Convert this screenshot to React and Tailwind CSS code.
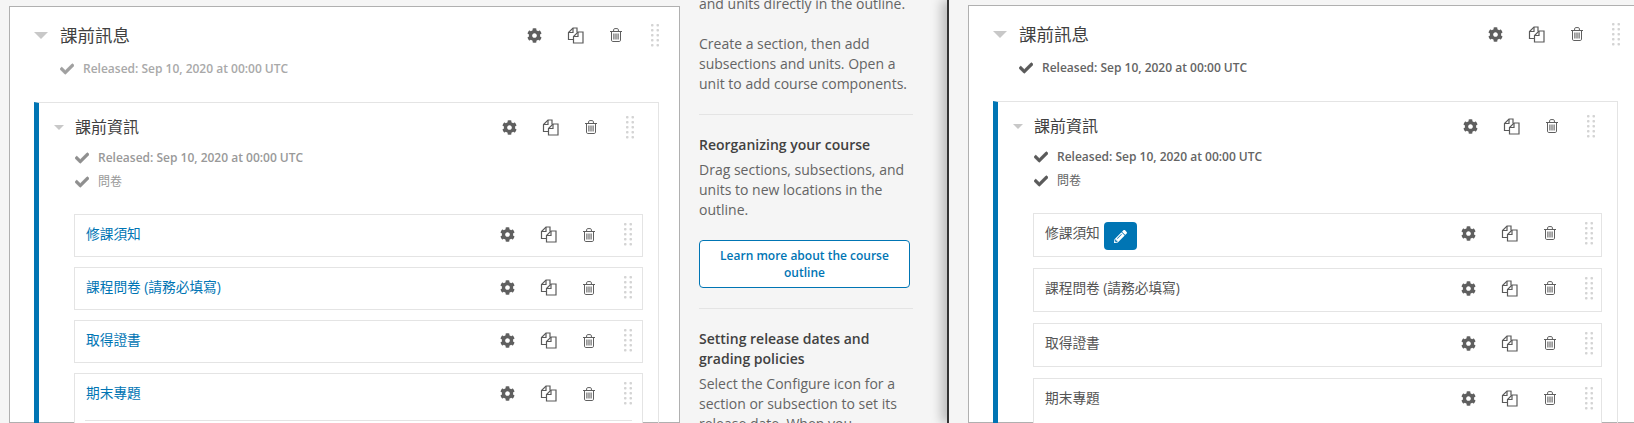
import { FaCheck, FaCog, FaPencilAlt } from "react-icons/fa";

const units = ["修課須知", "課程問卷 (請務必填寫)", "取得證書", "期末專題"];

const CopyIcon = () => (
  <svg width="17" height="17" viewBox="0 0 17 17" fill="none" stroke="#5a5a5a" strokeWidth="1.2">
    <path d="M6.5 12.5H1.5V5.5L6 1H10V5.5" />
    <path d="M1.5 5.5H6V1" />
    <path d="M6.5 16V9.5L11 5H16V16Z" fill="#fff" />
    <path d="M6.5 9.5H11V5" />
  </svg>
);

const TrashIcon = () => (
  <svg width="12" height="14" viewBox="0 0 12 14" fill="none" stroke="#5f5f5f" strokeWidth="1">
    <path d="M0 3.5H12" />
    <path d="M3.6 3.5V1.8C3.6 1.1 4.1 0.6 4.8 0.6H7.2C7.9 0.6 8.4 1.1 8.4 1.8V3.5" />
    <path d="M1.5 3.5V12.2C1.5 12.9 2 13.5 2.7 13.5H9.3C10 13.5 10.5 12.9 10.5 12.2V3.5" />
    <path d="M3.9 5.5V11.5M6 5.5V11.5M8.1 5.5V11.5" strokeWidth="1.1" />
  </svg>
);

const DragHandle = () => (
  <svg width="8" height="23" viewBox="0 0 8 23" fill="#d4d4d4">
    {[0, 5, 10, 15, 20].map((y) => (
      <g key={y}>
        <rect x="0" y={y} width="2.5" height="2.5" rx="0.8" />
        <rect x="5.5" y={y} width="2.5" height="2.5" rx="0.8" />
      </g>
    ))}
  </svg>
);

const Actions = ({ className }) => (
  <div className={`ml-auto flex items-center ${className}`}>
    <span className="flex w-[41px] justify-center text-[#5f5f5f]">
      <FaCog size={15} />
    </span>
    <span className="flex w-[41px] justify-center">
      <CopyIcon />
    </span>
    <span className="flex w-[41px] justify-center pr-[2px]">
      <TrashIcon />
    </span>
    <span className="ml-[10px] flex w-[16px] justify-center">
      <DragHandle />
    </span>
  </div>
);

const Meta = ({ children, className, checkClass }) => (
  <div className={`flex h-5 items-center gap-[9px] text-xs ${className}`}>
    <FaCheck size={14} className={checkClass} stroke="currentColor" strokeWidth={24} />
    <span>{children}</span>
  </div>
);

const leftTheme = {
  meta: "text-[#a9a9a9] font-semibold",
  subMeta: "text-[#999999] font-semibold",
  cjkMeta: "text-[#999999] font-normal",
  check: "text-[#a0a0a0]",
  subCheck: "text-[#8f8f8f]",
  unit: "h-[41px] pb-[2px] text-[#0075b4]",
  list: "gap-[10px]",
  sectionPad: "pr-[16px]",
  subPad: "pr-[20px]",
  unitPad: "pr-[6px]",
};

const rightTheme = {
  meta: "text-[#646464] font-semibold",
  subMeta: "text-[#646464] font-semibold",
  cjkMeta: "text-[#646464] font-normal",
  check: "text-[#5a5a5a]",
  subCheck: "text-[#5a5a5a]",
  unit: "h-[42px] pb-[4px] text-[#555555]",
  list: "gap-[11px]",
  sectionPad: "pr-[14px]",
  subPad: "pr-[18px]",
  unitPad: "pr-[4px]",
};

const Section = ({ theme, editFirst }) => (
  <div className="w-[671px] shrink-0 border border-[#b0b0b0] bg-white pt-[16px] pb-10 pl-[24px]">
    <div className="flex h-6 items-center">
      <span className="h-0 w-0 border-x-[7px] border-t-[7px] border-x-transparent border-t-[#c8c8c8]" />
      <h2 className="ml-[12px] text-[17.5px] font-normal text-[#414141]">課前訊息</h2>
      <Actions className={theme.sectionPad} />
    </div>
    <div className="mt-[12px] pl-[26px]">
      <Meta className={theme.meta} checkClass={theme.check}>
        Released: Sep 10, 2020 at 00:00 UTC
      </Meta>
    </div>

    <div className="mt-[23px] mr-[20px] border border-l-[5px] border-[#e4e4e4] border-l-[#0075b4] pt-[12px] pb-6 pl-[15px]">
      <div className="flex h-6 items-center">
        <span className="h-0 w-0 border-x-[5px] border-t-[5px] border-x-transparent border-t-[#c8c8c8]" />
        <h3 className="ml-[11px] text-base font-normal text-[#414141]">課前資訊</h3>
        <Actions className={theme.subPad} />
      </div>
      <div className="mt-[9px] flex flex-col gap-1 pl-[21px]">
        <Meta className={theme.subMeta} checkClass={theme.subCheck}>
          Released: Sep 10, 2020 at 00:00 UTC
        </Meta>
        <Meta className={theme.cjkMeta} checkClass={theme.subCheck}>
          問卷
        </Meta>
      </div>

      <div className={`mt-[22px] mr-[15px] ml-[20px] flex flex-col ${theme.list}`}>
        {units.map((title, i) => (
          <div key={title} className="border border-[#e4e4e4] bg-white">
            <div className={`flex items-center pl-[11px] text-[13.7px] ${theme.unit}`}>
              <span>{title}</span>
              {editFirst && i === 0 && (
                <span className="ml-[4px] flex h-7 w-[33px] translate-y-[3px] items-center justify-center rounded bg-[#0075b4] text-white">
                  <FaPencilAlt size={13} />
                </span>
              )}
              <Actions className={theme.unitPad} />
            </div>
            {i === 3 && <div className="mx-[10px] mt-[5px] h-10 border-t border-[#e4e4e4]" />}
          </div>
        ))}
      </div>
    </div>
  </div>
);

const Sidebar = () => (
  <aside className="ml-[19px] -mt-[12px] w-[214px] shrink-0 text-sm leading-5 text-[#646464]">
    <p>and units directly in the outline.</p>
    <p className="mt-5">
      Create a section, then add subsections and units. Open a unit to add course components.
    </p>
    <hr className="mt-5 border-[#e4e4e4]" />
    <h4 className="mt-5 font-semibold text-[#414141]">Reorganizing your course</h4>
    <p className="mt-[5px]">
      Drag sections, subsections, and units to new locations in the outline.
    </p>
    <a className="mt-[20px] block w-[211px] rounded border border-[#0075b4] bg-white px-2 py-[6px] text-center text-xs leading-[17px] font-semibold text-[#0075b4]">
      Learn more about the course outline
    </a>
    <hr className="mt-5 border-[#e4e4e4]" />
    <h4 className="mt-5 font-semibold text-[#414141]">Setting release dates and grading policies</h4>
    <p className="mt-[5px]">
      Select the Configure icon for a section or subsection to set its release date. When you
    </p>
  </aside>
);

export default function App() {
  return (
    <div
      className="flex h-[423px] w-[1634px] overflow-hidden bg-[#f5f5f5]"
      style={{ fontFamily: '"Open Sans", "Noto Sans CJK TC", sans-serif' }}
    >
      <div className="flex w-[947px] shrink-0 pt-[6px] pl-[9px]">
        <Section theme={leftTheme} />
        <Sidebar />
      </div>
      <div className="relative flex flex-1 border-l-2 border-[#333333] pt-[5px] pl-[19px] shadow-[-6px_0_10px_rgba(0,0,0,0.22)]">
        <Section theme={rightTheme} editFirst />
      </div>
    </div>
  );
}
